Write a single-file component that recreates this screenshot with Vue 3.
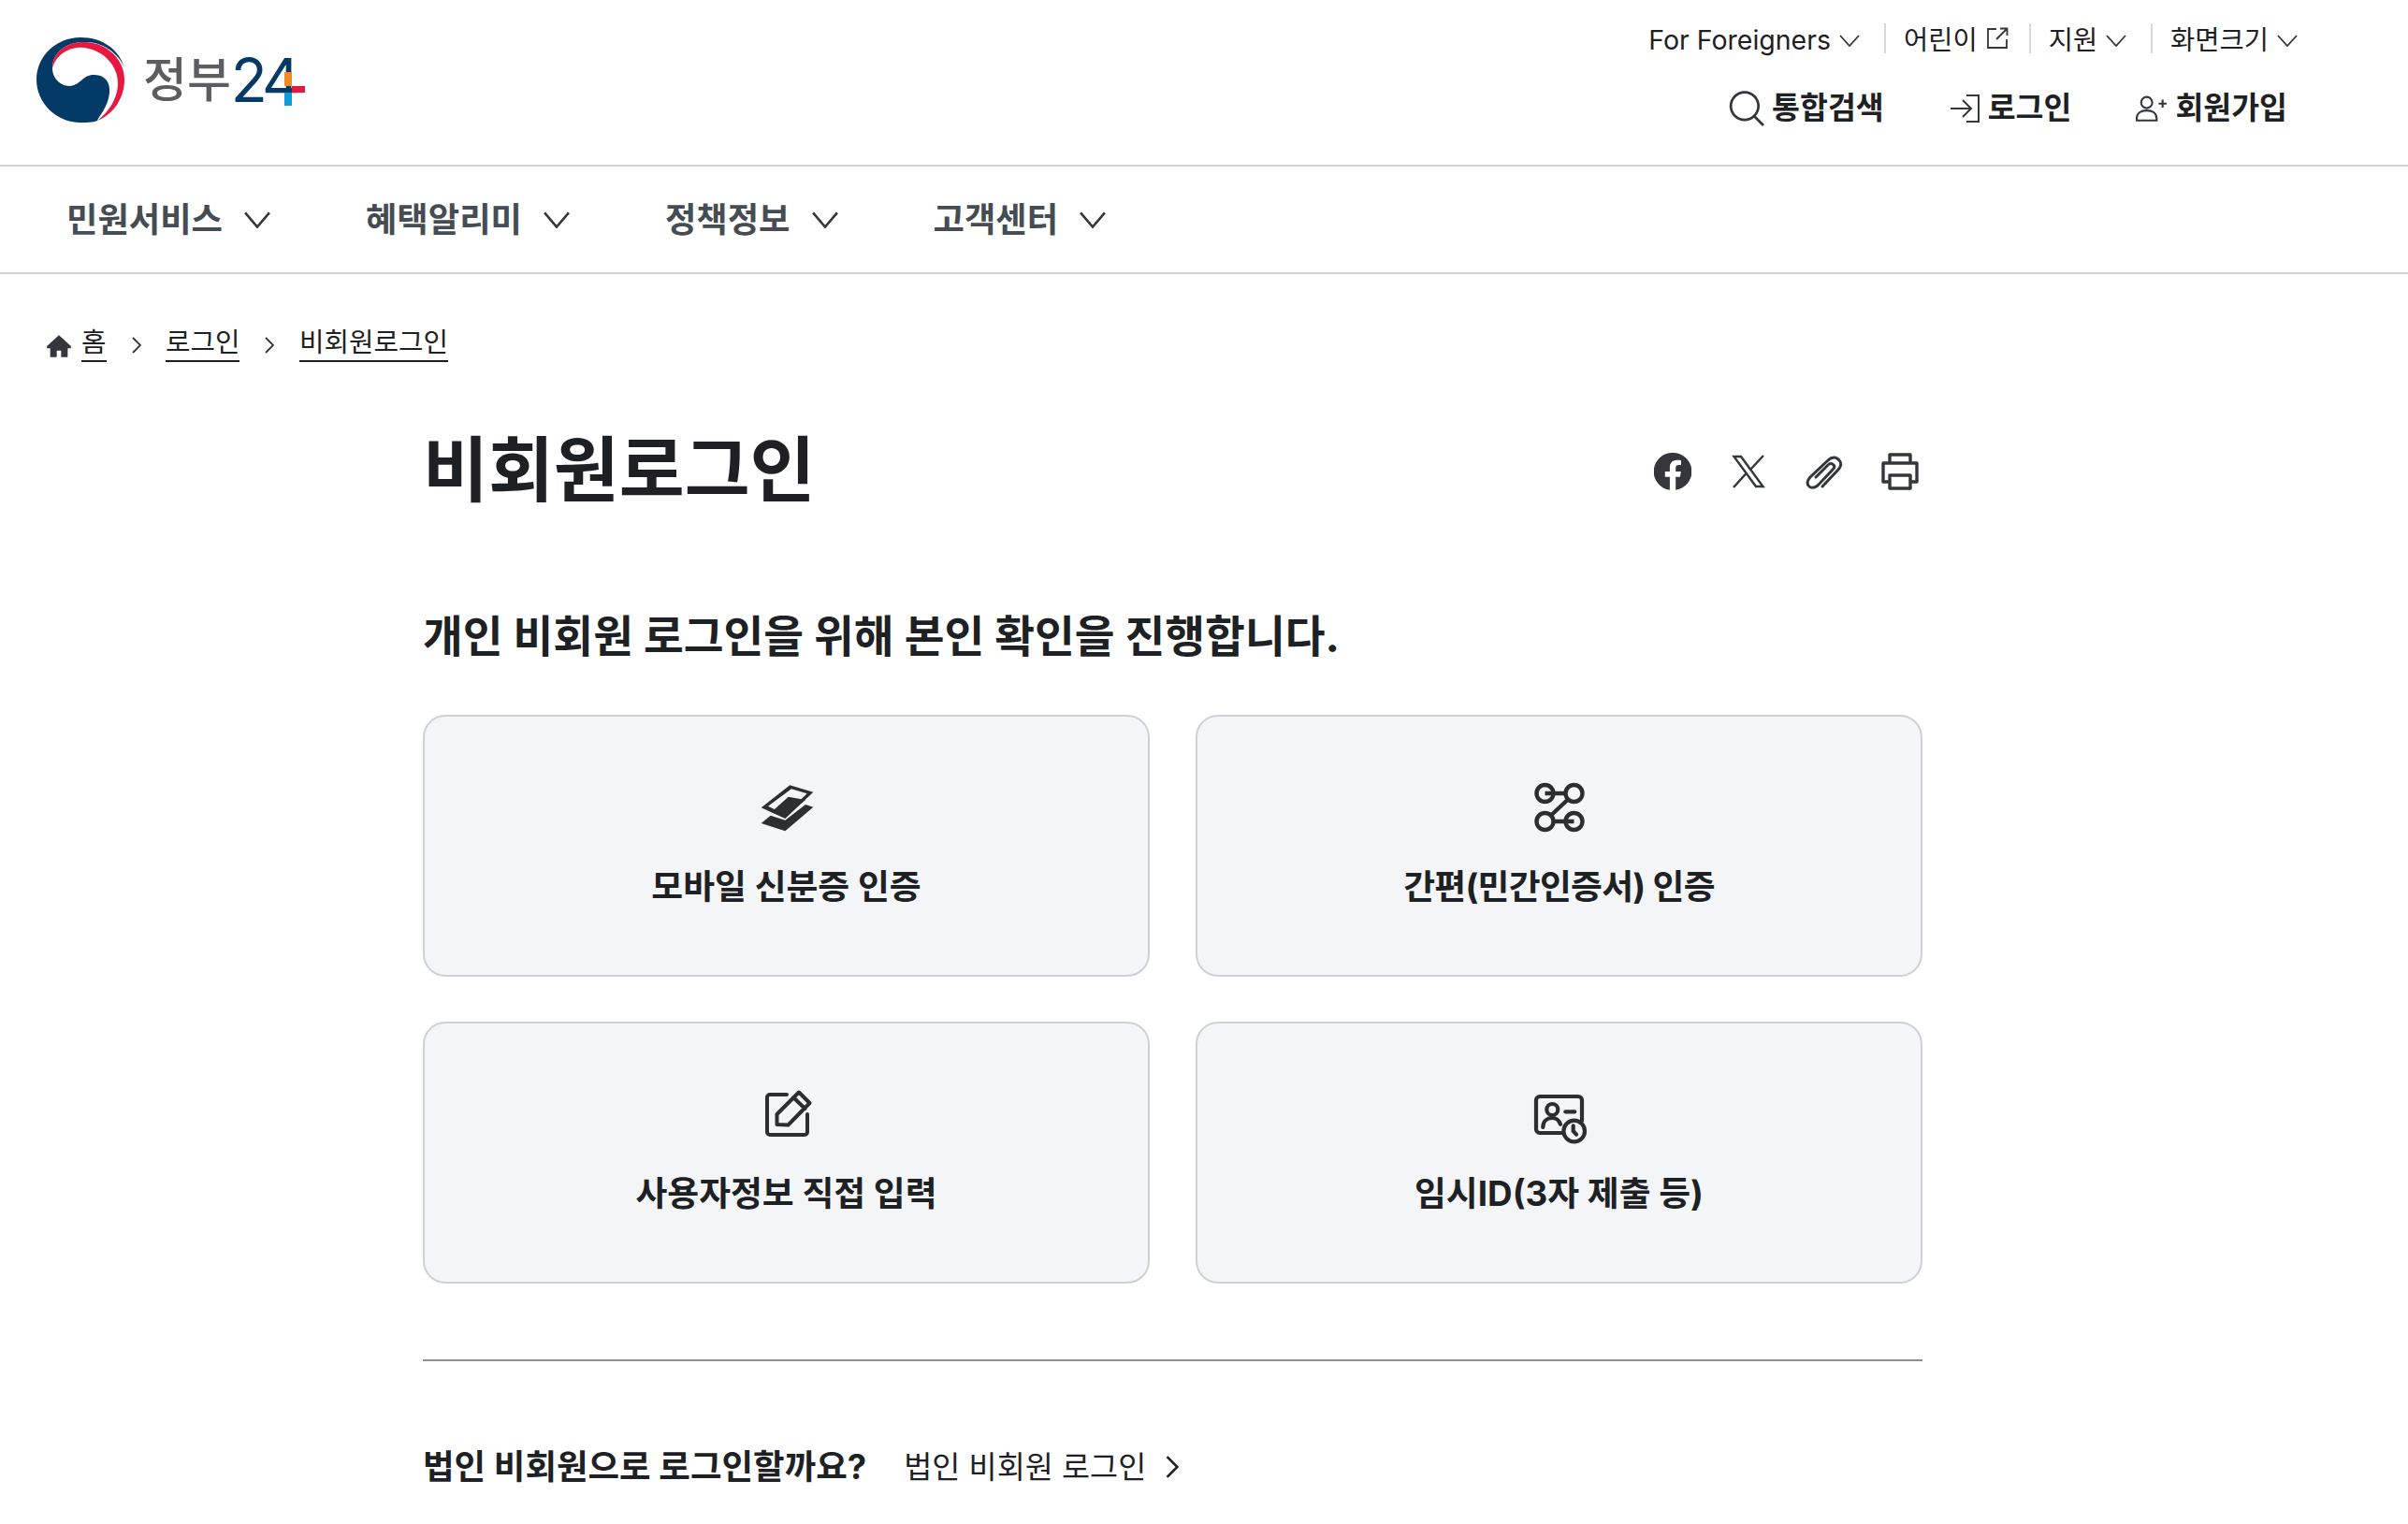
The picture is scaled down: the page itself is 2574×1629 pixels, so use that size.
<script setup>
const topLinks = [
  { label: 'For Foreigners', icon: 'chevron' },
  { label: '어린이', icon: 'external' },
  { label: '지원', icon: 'chevron' },
  { label: '화면크기', icon: 'chevron' },
];
const navItems = ['민원서비스', '혜택알리미', '정책정보', '고객센터'];
const crumbs = ['로그인', '비회원로그인'];
const cards = [
  { label: '모바일 신분증 인증', icon: 'mobile' },
  { label: '간편(민간인증서) 인증', icon: 'simple' },
  { label: '사용자정보 직접 입력', icon: 'write' },
  { label: '임시ID(3자 제출 등)', icon: 'temp' },
];
</script>

<template>
  <div class="page">
    <header class="header">
      <a class="logo">
        <svg class="logo-mark" viewBox="0 0 96 92">
          <path fill="#043a66" d="M47 1C71 1 88 14 94 33C87 17 70 6 53 6C35 5 17 15 17 34C17 47 30 56 40 52C50 48 50 41 62 41C74 41 79 50 78 60C77 75 66 86 65 90C60 92 52 92 47 92C21 92 0 71 0 46C0 21 21 1 47 1Z" />
          <path fill="#e8173f" d="M17 34C17 15 35 5 53 6C76 7 94 25 94 46C94 67 81 84 65 90C77 81 87 66 87 50C87 32 73 15 51 12C36 10 21 19 17 34Z" />
        </svg>
        <span class="logo-text">
          <span class="logo-kr">정부</span><span class="logo-num">24</span>
          <i class="plus plus-top"></i><i class="plus plus-bottom"></i><i class="plus plus-right"></i>
        </span>
      </a>
      <div class="header-right">
        <ul class="top-links">
          <li v-for="link in topLinks" :key="link.label" class="top-link">
            <span>{{ link.label }}</span>
            <svg v-if="link.icon === 'chevron'" class="top-chevron" viewBox="0 0 22 13"><path d="M1 1l10 11L21 1" /></svg>
            <svg v-else class="top-external" viewBox="0 0 24 24"><path d="M11 2H2v20h20v-9M15 1.500h7.500V9M22 2L11 13" /></svg>
          </li>
        </ul>
        <div class="utils">
          <a class="util">
            <svg class="util-search" viewBox="0 0 36 36"><circle cx="16" cy="15.500" r="14" /><path d="M26 26l9 9" /></svg>
            통합검색
          </a>
          <a class="util">
            <svg class="util-login" viewBox="0 0 32 30"><path d="M18 1h13v28H18M1 15h22M14 6l9 9-9 9" /></svg>
            로그인
          </a>
          <a class="util">
            <svg class="util-join" viewBox="0 0 32 26"><circle cx="11" cy="7" r="5.600" /><path d="M1 25v-2c0-5 4-8 10-8s10 3 10 8v2zM23 8h8M27 4v8" /></svg>
            회원가입
          </a>
        </div>
      </div>
    </header>

    <nav class="nav">
      <a v-for="item in navItems" :key="item" class="nav-item">
        {{ item }}
        <svg class="nav-chevron" viewBox="0 0 26 16"><path d="M1 1l12 14L25 1" /></svg>
      </a>
    </nav>

    <div class="breadcrumb">
      <svg class="home" viewBox="0 0 24 22"><path d="M12 1L1 11v2h3v8h6v-6h4v6h6v-8h3v-2z" /></svg>
      <a class="crumb">홈</a>
      <template v-for="crumb in crumbs" :key="crumb">
        <svg class="crumb-sep" viewBox="0 0 10 18"><path d="M1 1l8 8-8 8" /></svg>
        <a class="crumb">{{ crumb }}</a>
      </template>
    </div>

    <main class="content">
      <div class="title-row">
        <h1 class="title">비회원로그인</h1>
        <div class="share">
          <svg class="share-icon" viewBox="0 0 40 40">
            <path fill="#33363a" d="M20 0a20 20 0 0 0-3.100 39.800V25.800h-5.100V20h5.100v-4.400c0-5 3-7.800 7.600-7.800 2.200 0 4.500.4 4.500.4v4.900h-2.500c-2.500 0-3.300 1.500-3.300 3.100V20h5.600l-.9 5.800h-4.700v14A20 20 0 0 0 20 0z" />
          </svg>
          <svg class="share-icon" viewBox="0 0 40 40">
            <path fill="none" stroke="#33363a" stroke-width="2.400" d="M4.500 4h7.500l23.500 32H28zM36 3L22 18M4 37l14.500-16" />
          </svg>
          <svg class="share-icon" viewBox="0 0 40 40">
            <path fill="none" stroke="#33363a" stroke-width="3" stroke-linecap="round" d="M18 36l16-17c4-4 5-8 2-11-3-4-8-4-12 0L6 25c-4 4-5 7-3 10s6 3 10 0l16-17c2-2 2-4 1-5-2-2-4-2-6 0L11 26" />
          </svg>
          <svg class="share-icon" viewBox="0 0 40 40">
            <path fill="none" stroke="#33363a" stroke-width="3.400" stroke-linejoin="round" d="M9 11V2h22v9M9 31H2V11h36v20h-7M9 24h22v14H9z" />
          </svg>
        </div>
      </div>

      <p class="lead">개인 비회원 로그인을 위해 본인 확인을 진행합니다.</p>

      <div class="cards">
        <button v-for="card in cards" :key="card.label" class="card">
          <svg v-if="card.icon === 'mobile'" class="card-icon" viewBox="0 0 60 60">
            <path fill="#2c2e32" fill-rule="evenodd" d="M33.300 6.300L58.300 13.700L28.300 42L2.700 30.300zM35 10.300L10 28.700L28.300 37.700L51.700 15.300z" />
            <path fill="#2c2e32" d="M31.700 18.700L50 22L28.300 38.700L15 33.700z" />
            <path fill="#2c2e32" d="M50 27L58.300 29.700L28.300 55.300L2.700 47L12.700 38.700L28.300 43.700z" />
          </svg>
          <svg v-else-if="card.icon === 'simple'" class="card-icon" viewBox="0 0 60 60">
            <g fill="none" stroke="#2c2e32" stroke-width="4.400">
              <circle cx="14.500" cy="15" r="9" /><circle cx="45.500" cy="15" r="9" />
              <circle cx="14.500" cy="45" r="9" /><circle cx="45.500" cy="45" r="9" />
              <path d="M14.500 15H36.500M39 21.500L21 38.500M23.500 45H45.500" />
            </g>
          </svg>
          <svg v-else-if="card.icon === 'write'" class="card-icon" viewBox="0 0 60 60">
            <g fill="none" stroke="#2c2e32" stroke-width="4" stroke-linecap="round" stroke-linejoin="round">
              <path d="M30 9H12a3 3 0 0 0-3 3v37a3 3 0 0 0 3 3h37a3 3 0 0 0 3-3V30" />
              <path d="M43 6.500L54.500 18L31.500 41.500L19.500 41V30zM37 12L49.500 24" />
            </g>
          </svg>
          <svg v-else class="card-icon" viewBox="0 0 60 60">
            <g fill="none" stroke="#2c2e32" stroke-width="4.200" stroke-linecap="round">
              <path d="M33 50H9a4 4 0 0 1-4-4V15a4 4 0 0 1 4-4h41a4 4 0 0 1 4 4v22" />
              <circle cx="22.300" cy="25" r="6" />
              <path d="M12.300 44c0-6 4-10 10-10 4 0 7 2 8.700 6.700M36.300 27.300h10" />
              <circle cx="45.700" cy="48" r="11.300" />
              <path d="M44.700 42.300V48L48 51.700" />
            </g>
          </svg>
          <span class="card-label" :class="{ 'card-label--tight': card.icon === 'simple' }">{{ card.label }}</span>
        </button>
      </div>

      <div class="corp">
        <strong class="corp-q">법인 비회원으로 로그인할까요?</strong>
        <a class="corp-link">
          법인 비회원 로그인
          <svg class="corp-arrow" viewBox="0 0 12 22"><path d="M1 1l10 10L1 21" /></svg>
        </a>
      </div>
    </main>
  </div>
</template>

<style scoped>
.page {
  height: 1629px;
  overflow: hidden;
  font-family: "Inter", "Noto Sans CJK KR", sans-serif;
  color: #1e2124;
  background: #fff;
}

.header {
  height: 176px;
  border-bottom: 2px solid #cdd1d5;
  display: flex;
  justify-content: space-between;
}

.logo {
  display: flex;
  align-items: flex-start;
  padding: 39px 0 0 39px;
}

.logo-mark {
  width: 96px;
  height: 92px;
}

.logo-text {
  position: relative;
  margin: 22px 0 0 18px;
  display: flex;
  align-items: center;
  height: 50px;
  line-height: 50px;
  white-space: nowrap;
}

.logo-kr {
  font-size: 51px;
  font-weight: 500;
  color: #5d5d5f;
}

.logo-num {
  font-size: 64px;
  font-weight: 400;
  letter-spacing: -5px;
  color: #043a66;
}

.plus {
  position: absolute;
  width: 8px;
}

.plus-top {
  left: 151px;
  top: 16px;
  height: 15px;
  background: #f08a24;
}

.plus-bottom {
  left: 151px;
  top: 38px;
  height: 14px;
  background: #0f9bd7;
}

.plus-right {
  left: 159px;
  top: 31px;
  width: 14px;
  height: 7px;
  background: #e8173f;
}

.header-right {
  display: flex;
  flex-direction: column;
  align-items: flex-end;
  padding: 25px 118px 0 0;
}

.top-links {
  list-style: none;
  margin: 0;
  padding: 0;
  display: flex;
  align-items: center;
  font-size: 28.500px;
  line-height: 32px;
}

.top-link {
  display: flex;
  align-items: center;
  gap: 9px;
  padding: 0 26px 0 19px;
  border-left: 2px solid #d6d8db;
}

.top-link > span {
  position: relative;
  top: 2px;
}

.top-link:first-child {
  border-left: 0;
}

.top-link:last-child {
  padding-right: 0;
}

.top-chevron {
  width: 22px;
  height: 13px;
  margin-top: 5px;
  fill: none;
  stroke: #33363a;
  stroke-width: 1.800;
}

.top-external {
  width: 24px;
  height: 24px;
  margin: 0 -4px 0 0;
  fill: none;
  stroke: #33363a;
  stroke-width: 1.800;
}

.utils {
  display: flex;
  gap: 69px;
  margin: 37px 11px 0 0;
}

.util {
  display: flex;
  align-items: center;
  gap: 8px;
  font-size: 32.500px;
  font-weight: 700;
  line-height: 44px;
}

.util svg {
  fill: none;
  stroke: #33363a;
  stroke-width: 2;
}

.util-search {
  width: 38px;
  height: 38px;
  stroke-width: 2.600 !important;
}

.util-login {
  width: 34px;
  height: 30px;
}

.util-join {
  width: 34px;
  height: 28px;
}

.nav {
  height: 113px;
  border-bottom: 2px solid #cdd1d5;
  display: flex;
  align-items: center;
  padding-left: 71px;
  gap: 102px;
}

.nav-item {
  display: flex;
  align-items: center;
  gap: 23px;
  font-size: 36.300px;
  line-height: 50px;
  font-weight: 700;
  color: #464c53;
}

.nav-chevron {
  width: 28px;
  height: 18px;
  fill: none;
  stroke: #33363a;
  stroke-width: 2.400;
}

.breadcrumb {
  display: flex;
  align-items: center;
  margin: 52px 0 0 49px;
  height: 44px;
  font-size: 28.800px;
}

.home {
  width: 28px;
  height: 26px;
  margin: 6px 10px 0 0;
  fill: #33363a;
}

.crumb {
  line-height: 38px;
  border-bottom: 2px solid #1e2124;
}

.crumb-sep {
  width: 10px;
  height: 18px;
  margin: 4px 26.500px 0 27px;
  fill: none;
  stroke: #33363a;
  stroke-width: 1.800;
}

.content {
  width: 1603px;
  margin-left: 452px;
}

.title-row {
  display: flex;
  align-items: center;
  justify-content: space-between;
  margin-top: 58px;
}

.title {
  margin: 0;
  font-size: 76px;
  font-weight: 700;
  line-height: 110px;
  color: #1e2124;
}

.share {
  display: flex;
  gap: 41px;
  margin: 4px 4px 0 0;
}

.share-icon {
  width: 40px;
  height: 40px;
}

.lead {
  margin: 91px 0 0;
  font-size: 46.500px;
  font-weight: 700;
  line-height: 64px;
  color: #1e2124;
}

.cards {
  display: grid;
  grid-template-columns: 1fr 1fr;
  gap: 48px 49px;
  margin-top: 52px;
}

.card {
  height: 280px;
  display: flex;
  flex-direction: column;
  align-items: center;
  justify-content: flex-start;
  padding: 67px 0 0;
  gap: 29px;
  background: #f4f5f6;
  border: 2px solid #cdd1d5;
  border-radius: 24px;
  font-family: inherit;
  font-size: 36.800px;
  font-weight: 700;
  color: #1e2124;
}

.card-icon {
  width: 60px;
  height: 60px;
  overflow: visible;
}

.card-label {
  line-height: 52px;
}

.card-label--tight {
  letter-spacing: -0.700px;
}

.corp {
  margin-top: 81px;
  padding-top: 87px;
  border-top: 2px solid #8a8f94;
  display: flex;
  align-items: center;
  gap: 40px;
}

.corp-q {
  font-size: 36.500px;
  line-height: 52px;
  font-weight: 700;
}

.corp-link {
  display: flex;
  align-items: center;
  gap: 21px;
  font-size: 32.700px;
  line-height: 52px;
}

.corp-arrow {
  width: 14px;
  height: 24px;
  fill: none;
  stroke: #1e2124;
  stroke-width: 2.400;
}
</style>

<style>
html, body {
  margin: 0;
  background: #fff;
}
</style>
